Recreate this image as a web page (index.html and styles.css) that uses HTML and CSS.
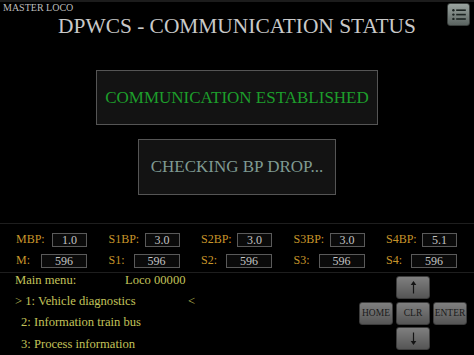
FILE: index.html
```html
<!DOCTYPE html>
<html>
<head>
<meta charset="utf-8">
<link rel="stylesheet" href="styles.css">
</head>
<body>
<div class="screen">
  <header class="header">
    <div class="master">MASTER LOCO</div>
    <h1 class="title">DPWCS - COMMUNICATION STATUS</h1>
    <div class="menu-wrap">
      <button class="menu-btn" aria-label="menu">
        <svg width="14" height="11" viewBox="0 0 14 11">
          <g fill="#1b2321">
            <circle cx="1.4" cy="1.2" r="1.2"/>
            <circle cx="1.4" cy="5.6" r="1.2"/>
            <circle cx="1.4" cy="10" r="1.2"/>
            <rect x="4.2" y="0.4" width="9.6" height="1.6"/>
            <rect x="4.2" y="4.8" width="9.6" height="1.6"/>
            <rect x="4.2" y="9.2" width="9.6" height="1.6"/>
          </g>
        </svg>
      </button>
    </div>
  </header>

  <section class="status">
    <div class="box box-ok">COMMUNICATION ESTABLISHED</div>
    <div class="box box-check">CHECKING BP DROP...</div>
  </section>

  <section class="data">
    <div class="row">
      <div class="cell"><span class="lbl">MBP:</span><span class="val val-bp">1.0</span></div>
      <div class="cell"><span class="lbl">S1BP:</span><span class="val val-bp">3.0</span></div>
      <div class="cell"><span class="lbl">S2BP:</span><span class="val val-bp">3.0</span></div>
      <div class="cell"><span class="lbl">S3BP:</span><span class="val val-bp">3.0</span></div>
      <div class="cell"><span class="lbl">S4BP:</span><span class="val val-bp">5.1</span></div>
    </div>
    <div class="row">
      <div class="cell"><span class="lbl">M:</span><span class="val val-n">596</span></div>
      <div class="cell"><span class="lbl">S1:</span><span class="val val-n">596</span></div>
      <div class="cell"><span class="lbl">S2:</span><span class="val val-n">596</span></div>
      <div class="cell"><span class="lbl">S3:</span><span class="val val-n">596</span></div>
      <div class="cell"><span class="lbl">S4:</span><span class="val val-n">596</span></div>
    </div>
  </section>

  <section class="bottom">
    <div class="menu">
      <div class="mline"><span class="mleft">Main menu:</span><span>Loco 00000</span></div>
      <div class="mline"><span class="mleft sel">&gt; 1: Vehicle diagnostics</span><span class="cursor">&lt;</span></div>
      <div class="mline indent">2: Information train bus</div>
      <div class="mline indent">3: Process information</div>
    </div>
    <div class="keys">
      <button class="key k-up" aria-label="up">
        <svg width="7" height="13" viewBox="0 0 7 13"><path d="M3.5 1 V12.5" stroke="#141414" stroke-width="1.2"/><path d="M3.5 0 L6.3 4 H0.7 Z" fill="#141414"/></svg>
      </button>
      <button class="key k-home">HOME</button>
      <button class="key k-clr">CLR</button>
      <button class="key k-enter">ENTER</button>
      <button class="key k-down" aria-label="down">
        <svg width="7" height="13" viewBox="0 0 7 13"><path d="M3.5 0.5 V12" stroke="#141414" stroke-width="1.2"/><path d="M3.5 13 L6.3 9 H0.7 Z" fill="#141414"/></svg>
      </button>
    </div>
  </section>
</div>
</body>
</html>
```

FILE: styles.css
```css
html, body {
  margin: 0;
  padding: 0;
  background: #000;
}
.screen {
  width: 474px;
  height: 355px;
  overflow: hidden;
  background: #000;
  border-top: 2px solid #1c1c1c;
  box-sizing: border-box;
  font-family: "Liberation Serif", serif;
}
.header {
  display: grid;
  grid-template-columns: minmax(0, 1fr) auto minmax(0, 1fr);
  height: 44px;
}
.master {
  font-size: 10px;
  color: #bdbdbd;
  padding: 0 0 0 3px;
  line-height: 11px;
  white-space: nowrap;
}
.title {
  margin: 0;
  padding-top: 12px;
  font-weight: normal;
  font-size: 21.4px;
  line-height: 24px;
  color: #c9c9c9;
  white-space: nowrap;
}
.menu-wrap {
  display: flex;
  justify-content: flex-end;
  padding: 1px 4px 0 0;
}
.menu-btn {
  width: 23px;
  height: 23px;
  padding: 0;
  border: 1px solid #3a3f3d;
  border-radius: 3px;
  background: linear-gradient(#9aa4a0, #5b6461);
  display: flex;
  align-items: center;
  justify-content: center;
}
.status {
  display: flex;
  flex-direction: column;
  align-items: center;
  gap: 14px;
  padding-top: 24px;
  height: 177px;
  box-sizing: border-box;
}
.box {
  background: #131313;
  border: 1px solid #555;
  display: flex;
  align-items: center;
  justify-content: center;
  font-size: 17px;
  box-sizing: border-box;
  white-space: nowrap;
}
.box-ok {
  width: 282px;
  height: 55px;
  color: #1d9e2b;
}
.box-check {
  width: 198px;
  height: 56px;
  color: #7f9a92;
}
.data {
  border-top: 1px solid #1e1e1e;
  border-bottom: 1px solid #1e1e1e;
  padding: 8px 0 4px 16px;
  display: flex;
  flex-direction: column;
  gap: 6px;
}
.row {
  display: grid;
  grid-template-columns: repeat(5, 92.5px);
}
.cell {
  display: flex;
  align-items: center;
  width: 71px;
  justify-content: space-between;
}
.lbl {
  color: #c8952a;
  font-size: 12px;
}
.val {
  border: 1px solid #5a5a5a;
  background: #0a0a0a;
  color: #c4c4c4;
  font-size: 12px;
  height: 14px;
  line-height: 12px;
  text-align: center;
  box-sizing: border-box;
}
.val-bp { width: 35px; }
.val-n { width: 46px; }
.bottom {
  display: flex;
  justify-content: space-between;
  padding-left: 15px;
}
.menu {
  margin-top: -3px;
  color: #c3c35a;
  font-size: 12.6px;
}
.mline {
  display: flex;
  height: 21.2px;
  align-items: center;
  white-space: nowrap;
}
.mleft {
  width: 110px;
}
.mleft.sel { width: 173px; }
.indent { padding-left: 6px; }
.keys {
  display: grid;
  grid-template-columns: repeat(3, 34px);
  grid-template-rows: repeat(3, 23px);
  gap: 2.5px 3px;
  padding: 3px 7px 0 0;
}
.key {
  padding: 0;
  border: 1px solid #3c3c3c;
  border-radius: 3px;
  background: linear-gradient(#7f7f7f, #555);
  color: #1a1a1a;
  font-family: "Liberation Serif", serif;
  font-size: 9.5px;
  display: flex;
  align-items: center;
  justify-content: center;
}
.k-up { grid-column: 2; grid-row: 1; }
.k-home { grid-column: 1; grid-row: 2; }
.k-clr { grid-column: 2; grid-row: 2; }
.k-enter { grid-column: 3; grid-row: 2; }
.k-down { grid-column: 2; grid-row: 3; }
```
